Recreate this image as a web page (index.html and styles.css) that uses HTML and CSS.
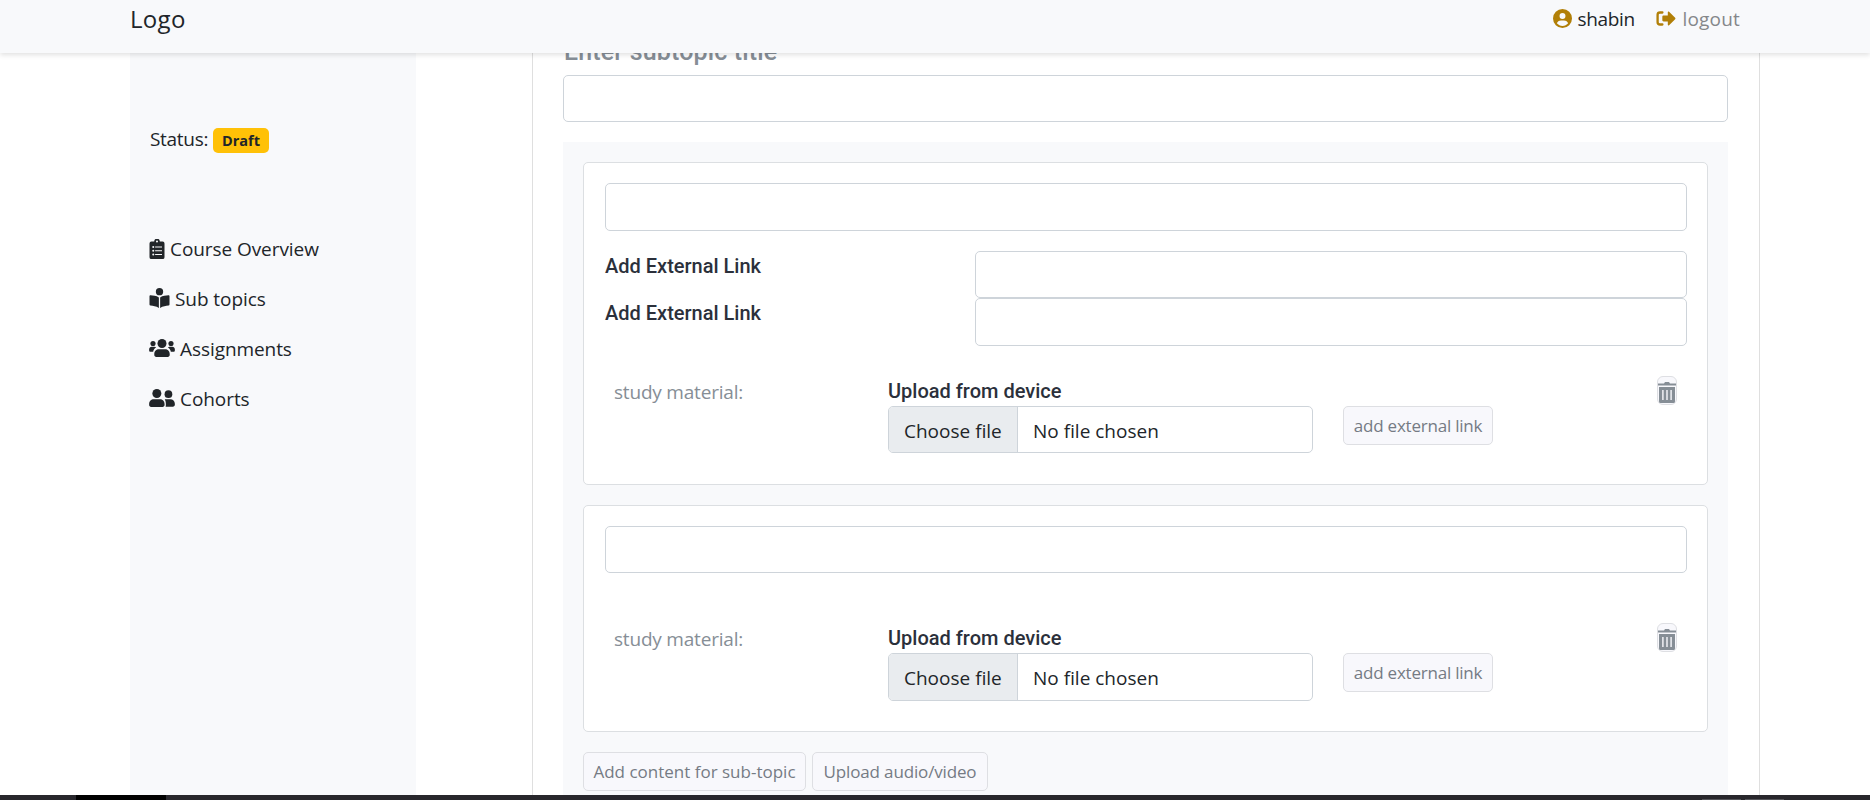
FILE: index.html
```html
<!DOCTYPE html>
<html lang="en">
<head>
<meta charset="utf-8">
<title>Course editor</title>
<link rel="stylesheet" href="styles.css">
</head>
<body>
<header class="topbar">
  <a class="brand"><span class="t t-logo">Logo</span></a>
  <nav class="account">
    <svg class="ic-user" viewBox="0 0 512 512"><path fill-rule="evenodd" d="M256 0a256 256 0 1 0 0 512a256 256 0 1 0 0-512zM256 110a80 80 0 1 1 0 160a80 80 0 1 1 0-160zM104 386c18-45 52-76 112-76h80c60 0 94 31 112 76c-38 44-92 70-152 70s-114-26-152-70z"/></svg>
    <span class="t t-user">shabin</span>
    <svg class="ic-out" viewBox="0 0 512 400"><path d="M160 40H96C60 40 32 66 32 100v200c0 34 28 60 64 60h64" fill="none" stroke="#b17f07" stroke-width="62" stroke-linecap="round"/><path d="M500 182L338 20c-12-12-34-6-34 14v86H190c-18 0-32 14-32 32v96c0 18 14 32 32 32h114v86c0 20 22 26 34 14l162-162c12-12 12-24 0-36z"/></svg>
    <span class="t t-logout">logout</span>
  </nav>
</header>
<main class="page">
  <aside class="sidebar">
    <p class="status"><span class="t t-status">Status:</span><span class="badge"><span class="t t-draft">Draft</span></span></p>
    <ul class="menu">
      <li><svg class="ic-clip" viewBox="0 0 384 512"><path fill-rule="evenodd" d="M48 64h72a72 72 0 0 1 144 0h72a48 48 0 0 1 48 48v352a48 48 0 0 1-48 48H48a48 48 0 0 1-48-48V112a48 48 0 0 1 48-48zM192 38a26 26 0 1 0 0 52a26 26 0 1 0 0-52zM144 192v28h176v-28zM144 286v28h176v-28zM144 382v28h176v-28zM96 180a26 26 0 1 0 0 52a26 26 0 1 0 0-52zM96 274a26 26 0 1 0 0 52a26 26 0 1 0 0-52zM96 370a26 26 0 1 0 0 52a26 26 0 1 0 0-52z"/></svg><span class="t t-course">Course Overview</span></li>
      <li><svg class="ic-book" viewBox="0 0 512 512"><circle cx="256" cy="94" r="94"/><path d="M240 240v272C170 466 90 452 24 448c-14-1-24-12-24-26V214c0-15 12-27 27-26c63 3 147 13 213 52zM272 240v272c70-46 150-60 216-64c14-1 24-12 24-26V214c0-15-12-27-27-26c-63 3-147 13-213 52z"/></svg><span class="t t-sub">Sub topics</span></li>
      <li><svg class="ic-group" viewBox="0 0 640 448"><circle cx="96" cy="112" r="64"/><circle cx="544" cy="112" r="64"/><circle cx="320" cy="112" r="112"/><path d="M64 192h64c18 0 34 7 45 19c-39 22-67 61-73 109H32c-18 0-32-14-32-32v-32c0-35 29-64 64-64zM576 192h-64c-18 0-34 7-45 19c39 22 67 61 73 109h68c18 0 32-14 32-32v-32c0-35-29-64-64-64zM243 256h154c64 0 115 51 115 115v29c0 26-22 48-48 48H176c-26 0-48-22-48-48v-29c0-64 51-115 115-115z"/></svg><span class="t t-assign">Assignments</span></li>
      <li><svg class="ic-pair" viewBox="0 0 640 448"><circle cx="192" cy="112" r="112"/><circle cx="480" cy="128" r="96"/><path d="M115 256h154c64 0 115 51 115 115v29c0 26-22 48-48 48H48c-26 0-48-22-48-48v-29c0-64 51-115 115-115zM388 256h140c62 0 112 50 112 112v24c0 26-22 48-48 48H410c4-12 6-24 6-40v-29c0-46-11-83-28-115z"/></svg><span class="t t-cohort">Cohorts</span></li>
    </ul>
  </aside>
  <section class="panel">
    <h2 class="panel-title">Enter subtopic title</h2>
    <div class="field field-title"></div>
    <div class="contents">
      <article class="card card-links">
        <div class="field field-first"></div>
        <div class="links">
          <label class="link-row"><span class="t t-label">Add External Link</span><span class="field"></span></label>
          <label class="link-row"><span class="t t-label">Add External Link</span><span class="field field-tall"></span></label>
        </div>
        <div class="material">
          <span class="study"><span class="t t-study">study material:</span></span>
          <div class="upload"><span class="t t-upload">Upload from device</span>
            <div class="file"><span class="choose"><span class="t t-choose">Choose file</span></span><span class="t t-none">No file chosen</span></div></div>
          <button class="btn btn-link"><span class="t t-add">add external link</span></button>
          <button class="trash"><svg viewBox="0 0 18 21"><path fill-rule="evenodd" d="M6 1.4L7 0h4l1 1.400h6v2H0v-2zM1 5h16v14.500a1.500 1.500 0 0 1-1.500 1.500h-13A1.500 1.500 0 0 1 1 19.500zM4.200 8v10h1.400V8zM8.300 8v10h1.400V8zM12.400 8v10h1.400V8z"/></svg></button>
        </div>
      </article>
      <article class="card card-plain">
        <div class="field"></div>
        <div class="material">
          <span class="study"><span class="t t-study">study material:</span></span>
          <div class="upload"><span class="t t-upload">Upload from device</span>
            <div class="file field-tall"><span class="choose"><span class="t t-choose">Choose file</span></span><span class="t t-none">No file chosen</span></div></div>
          <button class="btn btn-link"><span class="t t-add">add external link</span></button>
          <button class="trash"><svg viewBox="0 0 18 21"><path fill-rule="evenodd" d="M6 1.400L7 0h4l1 1.400h6v2H0v-2zM1 5h16v14.500a1.500 1.500 0 0 1-1.500 1.500h-13A1.500 1.500 0 0 1 1 19.500zM4.200 8v10h1.400V8zM8.300 8v10h1.400V8zM12.400 8v10h1.400V8z"/></svg></button>
        </div>
      </article>
      <div class="actions"><button class="btn btn-content"><span class="t t-content">Add content for sub-topic</span></button><button class="btn btn-av"><span class="t t-av">Upload audio/video</span></button></div>
    </div>
  </section>
</main>
<footer class="taskbar"><span class="task-active"></span><span class="task-mark"></span><span class="task-mark"></span></footer>
</body>
</html>
```
FILE: styles.css
```css
* { box-sizing: border-box; }
html, body { margin: 0; height: 100%; overflow: hidden; }
body {
  display: flex;
  flex-direction: column;
  height: 800px;
  background: #fff;
  color: #212529;
  font: 19px/30px "Open Sans", "Noto Sans", sans-serif;
}
h2, p, ul { margin: 0; padding: 0; }
button { font: inherit; margin: 0; }
.t { display: inline-block; white-space: nowrap; }

.topbar {
  position: relative;
  z-index: 2;
  flex: none;
  display: flex;
  justify-content: space-between;
  height: 53px;
  padding: 4px 130px 0 130px;
  background: #f8f9fb;
  box-shadow: 0 2px 5px rgba(0, 0, 0, .12);
}
.t-logo { font-size: 24px; letter-spacing: .3px; }
.account { display: flex; align-items: flex-start; fill: #b17f07; }
.ic-user { width: 19px; height: 19px; margin: 5px 5px 0 0; }
.ic-out { width: 20px; height: 15px; margin: 7px 6px 0 0; }
.t-user { width: 79px; letter-spacing: -.3px; }
.t-logout { color: #85878a; letter-spacing: .2px; }

.page { flex: 1; min-height: 0; overflow: hidden; display: flex; padding-left: 130px; }
.sidebar { width: 286px; padding: 71px 0 0 19px; background: #f8f9fb; }
.status { display: flex; height: 32px; }
.t-status { width: 64px; padding-left: 1px; letter-spacing: -.3px; }
.badge { height: 25px; width: 56px; margin-top: 4px; border-radius: 5px; background: #ffc107; text-align: center; font-size: 14.5px; font-weight: 700; line-height: 25px; }
.menu { list-style: none; padding-top: 78px; letter-spacing: -.07px; }
.menu li { display: flex; align-items: flex-start; height: 50px; fill: #212529; }
.ic-clip { width: 16px; height: 20px; margin: 5px 5px 0 0; }
.ic-book { width: 21px; height: 20px; margin: 4px 5px 0 0; }
.ic-group, .ic-pair { width: 26px; height: 18px; margin: 5px 5px 0 0; }

.panel { width: 1228px; margin-left: 116px; padding: 0 31px 0 30px; border: solid #dfdfdf; border-width: 0 1px; }
.panel-title { height: 38px; margin-top: -16px; padding-left: 1px; color: #868e96; font: 500 25px/30px Roboto, sans-serif; letter-spacing: .15px; }
.field { display: block; height: 47px; border: 1px solid #ced4da; border-radius: 5px; background: #fff; }
.field-first, .field-tall { height: 48px; }
.contents { margin-top: 20px; padding: 20px 20px 40px; background: #f8f9fb; }
.card { padding: 20px 20px 20px 21px; margin-bottom: 20px; border: 1px solid #dcdfe2; border-radius: 5px; background: #fff; }
.card-links { height: 323px; }
.card-plain { height: 227px; }
.links { margin-top: 20px; }
.link-row { display: grid; grid-template-columns: 370px 1fr; align-items: start; }
.t-label, .t-upload { font: 500 20px/30px Roboto, sans-serif; color: #2b303b; }

.material { display: grid; grid-template-columns: 283px 425px 30px 150px 1fr 20px; align-items: start; margin-top: 30px; padding-right: 10px; }
.card-plain .material { margin-top: 50px; }
.study { padding: 1px 0 0 9px; color: #868e96; letter-spacing: -.2px; }
.upload .t-upload { display: block; }
.file { display: flex; height: 47px; border: 1px solid #ced4da; border-radius: 5px; overflow: hidden; line-height: 48px; }
.field-tall { height: 48px; }
.choose { width: 129px; background: #e9ecef; border-right: 1px solid #ced4da; padding-left: 15px; margin-right: 15px; }
.btn { height: 39px; padding: 0; border: 1px solid #dedfe3; border-radius: 5px; background: #f8f8fc; color: #757b84; font-size: 17px; line-height: 37px; text-align: center; }
.btn-link { grid-column: 4; margin-top: 30px; letter-spacing: -.22px; }
.trash { grid-column: 6; height: 29px; padding: 4px 0 0; border: 1px solid #dedfe3; border-radius: 6px; background: #f8f8fc; line-height: 0; }
.trash svg { width: 18px; height: 21px; fill: #868e96; }
.actions { display: flex; gap: 6px; }
.btn-content { width: 223px; }
.btn-av { width: 176px; letter-spacing: -.15px; }

.taskbar { position: relative; z-index: 2; flex: none; display: flex; height: 5px; background: #28272c; padding-left: 76px; }
.task-active { width: 90px; background: #000; margin-right: 1536px; }
.task-mark { width: 39px; height: 1px; margin: 4px 4px 0 0; background: #55555a; }
```
